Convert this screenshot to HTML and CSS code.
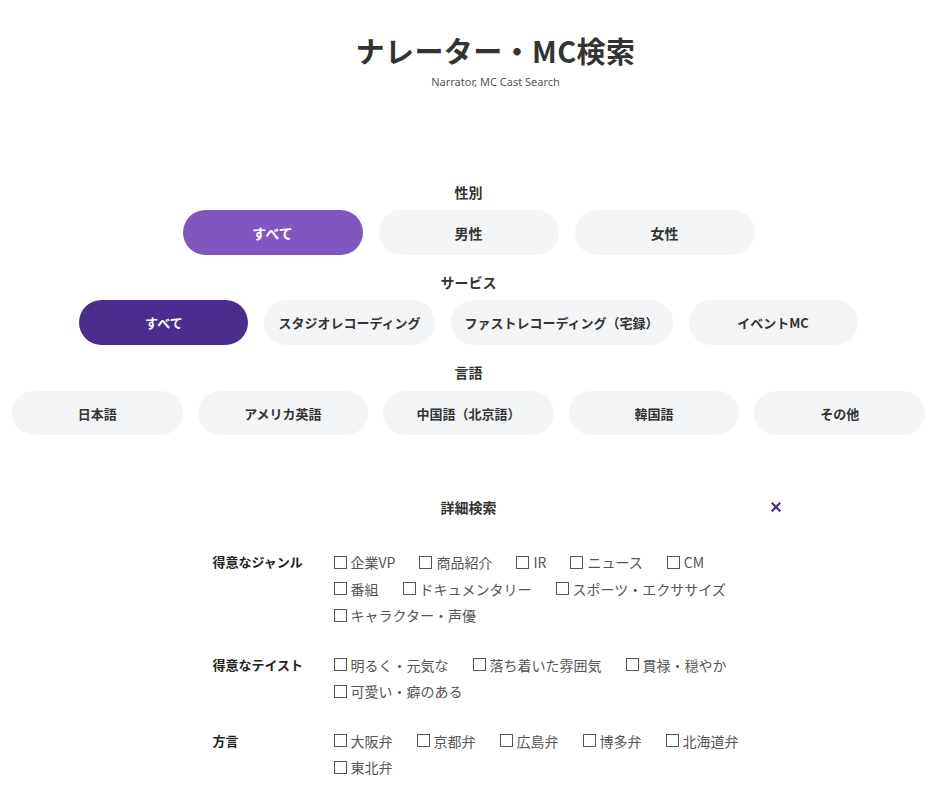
FILE: index.html
```html
<!DOCTYPE html>
<html lang="ja">
<head>
<meta charset="utf-8">
<title>ナレーター・MC検索</title>
<link rel="stylesheet" href="styles.css">
</head>
<body>
<header class="head">
  <h1 class="title">ナレーター・MC検索</h1>
  <p class="subtitle">Narrator, MC Cast Search</p>
</header>

<section class="filter filter-first">
  <h2 class="filter-label">性別</h2>
  <div class="btn-row">
    <button class="pill pill-gender is-on-light">すべて</button>
    <button class="pill pill-gender">男性</button>
    <button class="pill pill-gender">女性</button>
  </div>
</section>

<section class="filter">
  <h2 class="filter-label">サービス</h2>
  <div class="btn-row">
    <button class="pill pill-service is-on-dark">すべて</button>
    <button class="pill pill-service">スタジオレコーディング</button>
    <button class="pill pill-service">ファストレコーディング（宅録）</button>
    <button class="pill pill-service">イベントMC</button>
  </div>
</section>

<section class="filter filter-lang">
  <h2 class="filter-label">言語</h2>
  <div class="btn-row btn-row-full">
    <button class="pill pill-lang">日本語</button>
    <button class="pill pill-lang">アメリカ英語</button>
    <button class="pill pill-lang">中国語（北京語）</button>
    <button class="pill pill-lang">韓国語</button>
    <button class="pill pill-lang">その他</button>
  </div>
</section>

<section class="detail">
  <div class="detail-head">
    <span></span>
    <h2 class="detail-title">詳細検索</h2>
    <span class="close">
      <svg width="10" height="10" viewBox="0 0 10 10"><path d="M1.5 1.5 L8.5 8.5 M8.5 1.5 L1.5 8.5" stroke="#4b2d8e" stroke-width="2.2" stroke-linecap="square"/></svg>
    </span>
  </div>

  <div class="detail-body">
    <div class="group">
      <div class="group-label">得意なジャンル</div>
      <div class="checks">
        <label class="check"><span class="box"></span>企業VP</label>
        <label class="check"><span class="box"></span>商品紹介</label>
        <label class="check"><span class="box"></span>IR</label>
        <label class="check"><span class="box"></span>ニュース</label>
        <label class="check"><span class="box"></span>CM</label>
        <label class="check"><span class="box"></span>番組</label>
        <label class="check"><span class="box"></span>ドキュメンタリー</label>
        <label class="check"><span class="box"></span>スポーツ・エクササイズ</label>
        <label class="check"><span class="box"></span>キャラクター・声優</label>
      </div>
    </div>
    <div class="group">
      <div class="group-label">得意なテイスト</div>
      <div class="checks">
        <label class="check"><span class="box"></span>明るく・元気な</label>
        <label class="check"><span class="box"></span>落ち着いた雰囲気</label>
        <label class="check"><span class="box"></span>貫禄・穏やか</label>
        <label class="check"><span class="box"></span>可愛い・癖のある</label>
      </div>
    </div>
    <div class="group">
      <div class="group-label">方言</div>
      <div class="checks">
        <label class="check"><span class="box"></span>大阪弁</label>
        <label class="check"><span class="box"></span>京都弁</label>
        <label class="check"><span class="box"></span>広島弁</label>
        <label class="check"><span class="box"></span>博多弁</label>
        <label class="check"><span class="box"></span>北海道弁</label>
        <label class="check"><span class="box"></span>東北弁</label>
      </div>
    </div>
  </div>
</section>
</body>
</html>
```

FILE: styles.css
```css
* { box-sizing: border-box; }

body {
  margin: 0;
  padding: 0 12px 40px;
  background: #fff;
  color: #333;
  font-family: "Noto Sans CJK JP", "Noto Sans", sans-serif;
}

.head {
  text-align: center;
  padding-top: 30px;
  padding-left: 54px;
}

.title {
  margin: 0;
  font-size: 29px;
  line-height: 40px;
  font-weight: 700;
  letter-spacing: 0.4px;
  color: #333;
}

.subtitle {
  margin: 4px 0 0;
  font-family: "Noto Sans", sans-serif;
  font-size: 11px;
  line-height: 16px;
  color: #555;
}

.filter { margin-top: 17px; }
.filter-first { margin-top: 92px; }

.filter-label {
  margin: 0 0 8px;
  text-align: center;
  font-size: 14px;
  line-height: 20px;
  font-weight: 700;
  color: #333;
}

.filter-lang .filter-label { margin-bottom: 9px; }

.btn-row {
  display: flex;
  justify-content: center;
  gap: 16px;
}

.btn-row-full { gap: 15px; }

.pill {
  border: none;
  border-radius: 23px;
  background: #f4f5f7;
  color: #333;
  font-family: "Noto Sans CJK JP", "Noto Sans", sans-serif;
  font-weight: 700;
  font-size: 13px;
  height: 45px;
  padding: 0 14px;
  cursor: pointer;
  white-space: nowrap;
}

.pill-gender {
  width: 180px;
  font-size: 14px;
}

.pill-service { min-width: 169px; }

.pill-lang {
  flex: 1;
  height: 44px;
}

.is-on-light { background: #7f57bf; color: #fff; }
.is-on-dark { background: #4b2d8e; color: #fff; }

.detail {
  width: 626px;
  margin: 62px auto 0;
}

.detail-head {
  display: grid;
  grid-template-columns: 1fr auto 1fr;
  align-items: center;
}

.detail-title {
  margin: 0;
  font-size: 14px;
  line-height: 20px;
  font-weight: 700;
  color: #333;
}

.close {
  justify-self: end;
  display: flex;
  width: 20px;
  height: 20px;
  align-items: center;
  justify-content: center;
  margin-right: -4px;
}

.detail-body {
  padding-left: 57px;
  padding-right: 22px;
  margin-top: 32px;
}

.group {
  display: flex;
  margin-bottom: 23px;
}

.group-label {
  width: 121px;
  flex: none;
  font-size: 13px;
  font-weight: 700;
  line-height: 26.5px;
  color: #222;
}

.checks {
  flex: 1;
  display: flex;
  flex-wrap: wrap;
  column-gap: 24px;
}

.check {
  display: flex;
  align-items: center;
  gap: 4px;
  font-size: 14px;
  line-height: 26.5px;
  color: #555;
  white-space: nowrap;
}

.box {
  width: 13px;
  height: 13px;
  border: 1px solid #555;
  background: #fff;
  flex: none;
}
```
